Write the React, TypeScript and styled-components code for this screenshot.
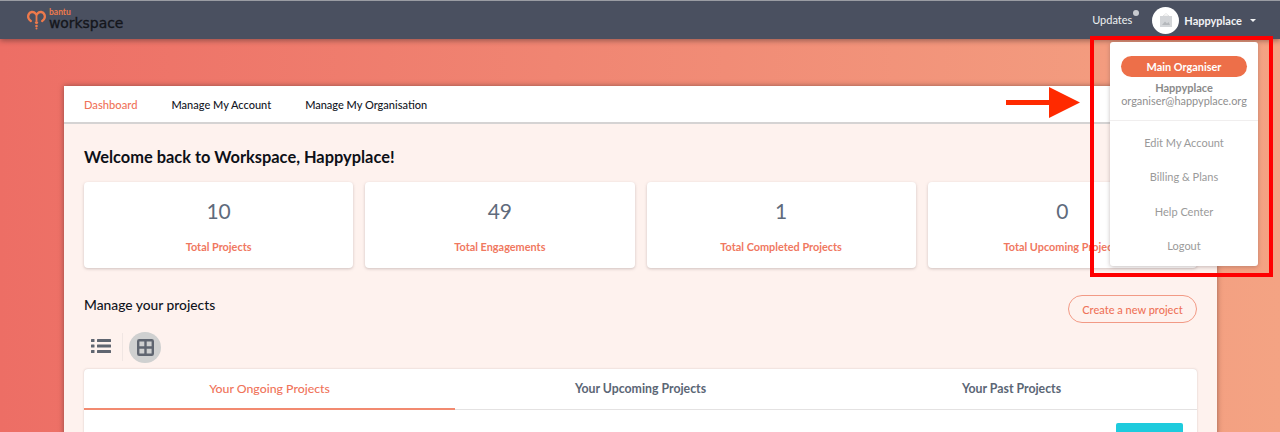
import React from 'react'
import styled, { createGlobalStyle } from 'styled-components'

const GlobalStyle = createGlobalStyle`
  html, body {
    margin: 0;
    padding: 0;
    height: 432px;
    overflow: hidden;
  }
  * {
    box-sizing: border-box;
  }
  body {
    font-family: Lato, "Open Sans", sans-serif;
  }
`

const Page = styled.div`
  position: relative;
  width: 1280px;
  height: 432px;
  overflow: hidden;
  background: linear-gradient(90deg, #ed6e65 0%, #f4a383 100%);
`

const TopBar = styled.header`
  position: relative;
  z-index: 2;
  height: 39px;
  background: #4a5060;
  border-top: 1px solid #9a9ca3;
  box-shadow: 0 2px 5px rgba(60, 40, 40, 0.45);
  display: flex;
  align-items: center;
  justify-content: space-between;
  padding: 0 24px 0 27px;
`

const Logo = styled.div`
  display: flex;
  align-items: flex-start;
  gap: 3px;
`

const LogoText = styled.div`
  display: flex;
  flex-direction: column;
`

const LogoSmall = styled.span`
  font-size: 8.5px;
  line-height: 8px;
  font-weight: 700;
  color: #ee7a4c;
`

const LogoBig = styled.span`
  font-family: "DejaVu Sans", sans-serif;
  font-size: 13.9px;
  line-height: 15px;
  color: #14161c;
  -webkit-text-stroke: 0.35px #14161c;
`

const UserArea = styled.div`
  display: flex;
  align-items: center;
`

const Updates = styled.span`
  position: relative;
  top: -1px;
  font-size: 11px;
  color: #eef0f2;
  margin-right: 20px;
`

const UpdateDot = styled.span`
  position: absolute;
  top: -3px;
  right: -7px;
  width: 6px;
  height: 6px;
  border-radius: 50%;
  background: #c9cbd0;
`

const Avatar = styled.div`
  width: 27px;
  height: 27px;
  border-radius: 50%;
  background: #fff;
  display: flex;
  align-items: center;
  justify-content: center;
  margin-right: 5px;
`

const UserName = styled.span`
  font-size: 11px;
  font-weight: 700;
  color: #f2f3f5;
  margin-right: 8px;
`

const Caret = styled.span`
  width: 0;
  height: 0;
  border-left: 3.5px solid transparent;
  border-right: 3.5px solid transparent;
  border-top: 3.5px solid #f2f3f5;
`

const Panel = styled.main`
  width: 1153px;
  margin: 47px 0 0 64px;
  background: #fef2ee;
  box-shadow: 0 0 5px rgba(70, 40, 40, 0.55);
  height: 400px;
`

const NavBar = styled.nav`
  height: 38px;
  background: #fff;
  border-bottom: 2px solid #d5d3d3;
  display: flex;
  align-items: center;
  gap: 34px;
  padding: 0 20px;
`

const NavItem = styled.a<{ $active?: boolean }>`
  font-size: ${({ $active }) => ($active ? '11.2px' : '11px')};
  font-weight: 500;
  color: ${({ $active }) => ($active ? '#f0735a' : '#14171f')};
`

const Content = styled.div`
  padding: 23px 20px 0;
`

const Welcome = styled.h1`
  margin: 0;
  font-size: 16.4px;
  line-height: 20px;
  font-weight: 700;
  color: #0d1017;
`

const StatGrid = styled.div`
  display: grid;
  grid-template-columns: repeat(4, 1fr);
  gap: 12px;
  margin-top: 15px;
`

const StatCard = styled.div`
  height: 86px;
  background: #fff;
  border-radius: 4px;
  box-shadow: 0 1px 3px rgba(120, 100, 100, 0.35);
  display: flex;
  flex-direction: column;
  align-items: center;
  padding-top: 16px;
`

const StatValue = styled.div`
  font-size: 21px;
  line-height: 25px;
  color: #5f6b7c;
`

const StatLabel = styled.div`
  margin-top: 17px;
  font-size: 10.9px;
  line-height: 14px;
  font-weight: 700;
  color: #f0785f;
`

const ManageRow = styled.div`
  display: flex;
  justify-content: space-between;
  margin-top: 26px;
`

const ManageTitle = styled.h2`
  margin: 2px 0 0;
  font-size: 13.8px;
  line-height: 18px;
  font-weight: 500;
  color: #10141c;
`

const CreateButton = styled.button`
  width: 129px;
  height: 28px;
  margin-top: 1px;
  border: 1px solid #f29a85;
  border-radius: 14px;
  background: transparent;
  font-family: inherit;
  font-size: 11px;
  font-weight: 500;
  color: #ef7358;
  padding: 0;
`

const ViewToggle = styled.div`
  display: flex;
  align-items: center;
  height: 32px;
  margin-top: 8px;
`

const ListIconBox = styled.div`
  width: 39px;
  height: 28px;
  display: flex;
  align-items: center;
  padding: 0 0 2px 7px;
  border-right: 1px solid #f0e6e3;
`

const GridIconBox = styled.div`
  width: 32px;
  height: 31px;
  margin-left: 6px;
  border-radius: 50%;
  background: #cfd0d0;
  display: flex;
  align-items: center;
  justify-content: center;
`

const TabsCard = styled.section`
  margin-top: 6px;
  background: #fff;
  border-radius: 4px 4px 0 0;
  box-shadow: 0 0 2px rgba(120, 100, 100, 0.35);
  height: 100px;
`

const TabRow = styled.div`
  display: grid;
  grid-template-columns: repeat(3, 1fr);
  height: 41px;
  border-bottom: 1px solid #e4e2e2;
`

const Tab = styled.div<{ $active?: boolean }>`
  display: flex;
  align-items: center;
  justify-content: center;
  height: ${({ $active }) => ($active ? '41px' : '39px')};
  font-size: 12.3px;
  font-weight: ${({ $active }) => ($active ? 500 : 700)};
  color: ${({ $active }) => ($active ? '#f0735a' : '#5b6675')};
  border-bottom: ${({ $active }) => ($active ? '2px solid #f28a70' : 'none')};
`

const TabBody = styled.div`
  display: flex;
  justify-content: flex-end;
  padding: 13px 14px 0 0;
`

const TealButton = styled.div`
  width: 67px;
  height: 30px;
  background: #1ecbdd;
  border-radius: 2px;
`

const Dropdown = styled.aside`
  position: absolute;
  z-index: 3;
  left: 1110px;
  top: 42px;
  width: 148px;
  height: 224px;
  background: #fff;
  border-radius: 3px;
  box-shadow: 0 1px 4px rgba(90, 70, 70, 0.35);
`

const DropHead = styled.div`
  height: 79px;
  padding: 14px 11px 0;
  border-bottom: 1px solid #f0eeee;
  display: flex;
  flex-direction: column;
  align-items: center;
`

const RolePill = styled.div`
  width: 126px;
  height: 21px;
  border-radius: 11px;
  background: #ed6f49;
  color: #fff;
  font-size: 10.9px;
  font-weight: 700;
  display: flex;
  align-items: center;
  justify-content: center;
`

const DropName = styled.div`
  margin-top: 5px;
  font-size: 11px;
  line-height: 12px;
  font-weight: 700;
  color: #8a8a8a;
`

const DropEmail = styled.div`
  font-size: 10.9px;
  line-height: 13px;
  color: #8f8f8f;
`

const DropMenu = styled.div`
  display: flex;
  flex-direction: column;
  padding-top: 4px;
`

const DropItem = styled.a`
  height: 34.5px;
  display: flex;
  align-items: center;
  justify-content: center;
  font-size: 11px;
  color: #9a9a9a;
`

const Highlight = styled.div`
  position: absolute;
  z-index: 4;
  left: 1090px;
  top: 36px;
  width: 183px;
  height: 241px;
  border: 4px solid #ff0000;
  pointer-events: none;
`

const ArrowMark = styled.svg`
  position: absolute;
  z-index: 4;
  left: 1006px;
  top: 87px;
`

const tabs = ['Your Ongoing Projects', 'Your Upcoming Projects', 'Your Past Projects']
const stats = [
  { value: 10, label: 'Total Projects' },
  { value: 49, label: 'Total Engagements' },
  { value: 1, label: 'Total Completed Projects' },
  { value: 0, label: 'Total Upcoming Projects' },
]

const App: React.FC = () => (
  <Page>
    <GlobalStyle />
    <TopBar>
      <Logo>
        <svg width="19" height="24" viewBox="0 0 19 24" fill="none">
          <path
            d="M3.8 13 C1.2 11.5 0.8 8.5 1.6 6.5 C2.8 3.6 6.6 3.2 8.2 5.2 L9.5 6.6 L10.8 5.2 C12.4 3.2 16.2 3.6 17.4 6.5 C18.2 8.5 17.8 11.5 15.2 13"
            stroke="#ee7a4c"
            strokeWidth="2.4"
            strokeLinecap="round"
          />
          <path d="M9.5 6.6 V13" stroke="#ee7a4c" strokeWidth="1.8" />
          <circle cx="9.5" cy="14.5" r="1.6" fill="#ee7a4c" />
          <circle cx="9.5" cy="18" r="1.3" fill="#ee7a4c" />
          <circle cx="9.5" cy="20.6" r="1" fill="#ee7a4c" />
        </svg>
        <LogoText>
          <LogoSmall>bantu</LogoSmall>
          <LogoBig>workspace</LogoBig>
        </LogoText>
      </Logo>
      <UserArea>
        <Updates>
          Updates
          <UpdateDot />
        </Updates>
        <Avatar>
          <svg width="14" height="15" viewBox="0 0 14 15">
            <path d="M7 0.5 L4 3 H10 Z" fill="none" stroke="#d5d5d5" strokeWidth="0.6" />
            <rect x="1" y="3" width="12" height="11" fill="#d3d5d8" />
            <path d="M3 12 L6 8.5 L8 10.5 L9.5 9 L11 12 Z" fill="#b5b8bc" />
          </svg>
        </Avatar>
        <UserName>Happyplace</UserName>
        <Caret />
      </UserArea>
    </TopBar>

    <Panel>
      <NavBar>
        <NavItem $active>Dashboard</NavItem>
        <NavItem>Manage My Account</NavItem>
        <NavItem>Manage My Organisation</NavItem>
      </NavBar>
      <Content>
        <Welcome>Welcome back to Workspace, Happyplace!</Welcome>
        <StatGrid>
          {stats.map((stat) => (
            <StatCard key={stat.label}>
              <StatValue>{stat.value}</StatValue>
              <StatLabel>{stat.label}</StatLabel>
            </StatCard>
          ))}
        </StatGrid>
        <ManageRow>
          <ManageTitle>Manage your projects</ManageTitle>
          <CreateButton>Create a new project</CreateButton>
        </ManageRow>
        <ViewToggle>
          <ListIconBox>
            <svg width="20" height="16" viewBox="0 0 20 16" fill="#5f6570">
              <rect x="0" y="1" width="3.5" height="3" rx="0.5" />
              <rect x="0" y="6.5" width="3.5" height="3" rx="0.5" />
              <rect x="0" y="12" width="3.5" height="3" rx="0.5" />
              <rect x="6" y="1" width="14" height="3" rx="0.5" />
              <rect x="6" y="6.5" width="14" height="3" rx="0.5" />
              <rect x="6" y="12" width="14" height="3" rx="0.5" />
            </svg>
          </ListIconBox>
          <GridIconBox>
            <svg width="17" height="17" viewBox="0 0 17 17" fill="none" stroke="#5f6570" strokeWidth="2.4">
              <rect x="1.2" y="1.2" width="14.6" height="14.6" rx="1" />
              <path d="M8.5 1 V16 M1 8.5 H16" />
            </svg>
          </GridIconBox>
        </ViewToggle>
        <TabsCard>
          <TabRow>
            {tabs.map((tab, i) => (
              <Tab key={tab} $active={i === 0}>
                {tab}
              </Tab>
            ))}
          </TabRow>
          <TabBody>
            <TealButton />
          </TabBody>
        </TabsCard>
      </Content>
    </Panel>

    <Dropdown>
      <DropHead>
        <RolePill>Main Organiser</RolePill>
        <DropName>Happyplace</DropName>
        <DropEmail>organiser@happyplace.org</DropEmail>
      </DropHead>
      <DropMenu>
        <DropItem>Edit My Account</DropItem>
        <DropItem>Billing &amp; Plans</DropItem>
        <DropItem>Help Center</DropItem>
        <DropItem>Logout</DropItem>
      </DropMenu>
    </Dropdown>

    <Highlight />
    <ArrowMark width="74" height="32" viewBox="0 0 74 32">
      <path d="M0 13 H43 V0 L74 15.5 L43 31 V18 H0 Z" fill="#ff2a00" />
    </ArrowMark>
  </Page>
)

export default App
